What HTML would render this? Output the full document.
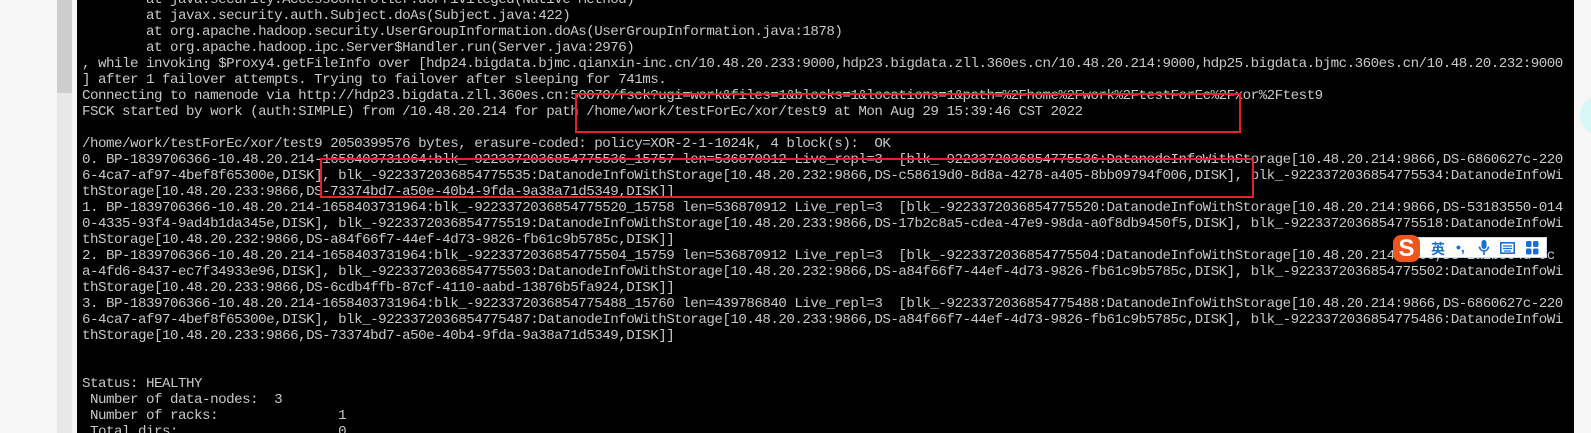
<!DOCTYPE html>
<html><head><meta charset="utf-8"><style>
html,body{margin:0;padding:0;width:1591px;height:433px;overflow:hidden;background:#f6f6f6;position:relative}
#sb{position:absolute;left:57px;top:0;width:15px;height:433px;background:#e8e8e8}
#sb2{position:absolute;left:57px;top:0;width:15px;height:93px;background:#cdcdcd}
#term{position:absolute;left:77px;top:0;width:1497px;height:433px;background:#000;overflow:hidden}
pre{position:absolute;left:5px;top:-8px;margin:0;font-family:"Liberation Mono",monospace;font-size:14px;letter-spacing:-0.5px;line-height:16px;color:#c8c8c8;white-space:pre;transform:scaleX(1.013);transform-origin:0 0}
.box{position:absolute;border:2px solid #e3202b;box-sizing:border-box}
#ime{position:absolute;left:1400px;top:237px;width:147px;height:21px;background:#fff;border:1px solid #cfd8e8;box-sizing:border-box}
#s{position:absolute;left:1393px;top:235px;width:27px;height:27px;border-radius:8px;background:#f0561c;color:#fff;font:bold 24px "Liberation Sans",sans-serif;text-align:center;line-height:27px}
.i{position:absolute;top:239px;color:#1a6fd6;font:bold 14px "Liberation Sans","Noto Sans CJK SC",sans-serif}
#circ{position:absolute;left:1580px;top:95px;width:40px;height:40px;border-radius:50%;background:#d6f7f6}
</style></head><body>
<div id="sb"></div><div id="sb2"></div><div id="circ"></div>
<div id="term"><pre>        at java.security.AccessController.doPrivileged(Native Method)
        at javax.security.auth.Subject.doAs(Subject.java:422)
        at org.apache.hadoop.security.UserGroupInformation.doAs(UserGroupInformation.java:1878)
        at org.apache.hadoop.ipc.Server$Handler.run(Server.java:2976)
, while invoking $Proxy4.getFileInfo over [hdp24.bigdata.bjmc.qianxin-inc.cn/10.48.20.233:9000,hdp23.bigdata.zll.360es.cn/10.48.20.214:9000,hdp25.bigdata.bjmc.360es.cn/10.48.20.232:9000
] after 1 failover attempts. Trying to failover after sleeping for 741ms.
Connecting to namenode via http://hdp23.bigdata.zll.360es.cn:50070/fsck?ugi=work&amp;files=1&amp;blocks=1&amp;locations=1&amp;path=%2Fhome%2Fwork%2FtestForEc%2Fxor%2Ftest9
FSCK started by work (auth:SIMPLE) from /10.48.20.214 for path /home/work/testForEc/xor/test9 at Mon Aug 29 15:39:46 CST 2022

/home/work/testForEc/xor/test9 2050399576 bytes, erasure-coded: policy=XOR-2-1-1024k, 4 block(s):  OK
0. BP-1839706366-10.48.20.214-1658403731964:blk_-9223372036854775536_15757 len=536870912 Live_repl=3  [blk_-9223372036854775536:DatanodeInfoWithStorage[10.48.20.214:9866,DS-6860627c-220
6-4ca7-af97-4bef8f65300e,DISK], blk_-9223372036854775535:DatanodeInfoWithStorage[10.48.20.232:9866,DS-c58619d0-8d8a-4278-a405-8bb09794f006,DISK], blk_-9223372036854775534:DatanodeInfoWi
thStorage[10.48.20.233:9866,DS-73374bd7-a50e-40b4-9fda-9a38a71d5349,DISK]]
1. BP-1839706366-10.48.20.214-1658403731964:blk_-9223372036854775520_15758 len=536870912 Live_repl=3  [blk_-9223372036854775520:DatanodeInfoWithStorage[10.48.20.214:9866,DS-53183550-014
0-4335-93f4-9ad4b1da345e,DISK], blk_-9223372036854775519:DatanodeInfoWithStorage[10.48.20.233:9866,DS-17b2c8a5-cdea-47e9-98da-a0f8db9450f5,DISK], blk_-9223372036854775518:DatanodeInfoWi
thStorage[10.48.20.232:9866,DS-a84f66f7-44ef-4d73-9826-fb61c9b5785c,DISK]]
2. BP-1839706366-10.48.20.214-1658403731964:blk_-9223372036854775504_15759 len=536870912 Live_repl=3  [blk_-9223372036854775504:DatanodeInfoWithStorage[10.48.20.214:9866,DS-1a2b3c4d-9c
a-4fd6-8437-ec7f34933e96,DISK], blk_-9223372036854775503:DatanodeInfoWithStorage[10.48.20.232:9866,DS-a84f66f7-44ef-4d73-9826-fb61c9b5785c,DISK], blk_-9223372036854775502:DatanodeInfoWi
thStorage[10.48.20.233:9866,DS-6cdb4ffb-87cf-4110-aabd-13876b5fa924,DISK]]
3. BP-1839706366-10.48.20.214-1658403731964:blk_-9223372036854775488_15760 len=439786840 Live_repl=3  [blk_-9223372036854775488:DatanodeInfoWithStorage[10.48.20.214:9866,DS-6860627c-220
6-4ca7-af97-4bef8f65300e,DISK], blk_-9223372036854775487:DatanodeInfoWithStorage[10.48.20.233:9866,DS-a84f66f7-44ef-4d73-9826-fb61c9b5785c,DISK], blk_-9223372036854775486:DatanodeInfoWi
thStorage[10.48.20.233:9866,DS-73374bd7-a50e-40b4-9fda-9a38a71d5349,DISK]]


Status: HEALTHY
 Number of data-nodes:  3
 Number of racks:               1
 Total dirs:                    0</pre></div>
<div class="box" style="left:575px;top:93px;width:666px;height:40px"></div>
<div class="box" style="left:320px;top:158px;width:934px;height:40px"></div>
<div id="ime"></div>
<div id="s">S</div>
<span class="i" style="left:1431px">英</span>
<span class="i" style="left:1456px">•,</span>
<svg style="position:absolute;left:1478px;top:240px" width="12" height="16" viewBox="0 0 12 16"><rect x="3.5" y="0" width="5" height="9" rx="2.5" fill="#1a6fd6"/><path d="M1.5 6.5a4.5 4.5 0 0 0 9 0M6 11v4" stroke="#1a6fd6" stroke-width="1.6" fill="none"/></svg>
<svg style="position:absolute;left:1500px;top:242px" width="15" height="12" viewBox="0 0 15 12"><rect x="0.8" y="0.8" width="13.4" height="10.4" fill="none" stroke="#1a6fd6" stroke-width="1.6"/><path d="M3 4h9M3 6.5h9M4 9h7" stroke="#1a6fd6" stroke-width="1.3"/></svg>
<svg style="position:absolute;left:1526px;top:241px" width="13" height="14" viewBox="0 0 13 14"><rect x="0" y="0" width="5.5" height="6" rx="1.5" fill="#1a6fd6"/><rect x="7" y="0" width="5.5" height="6" rx="1.5" fill="#1a6fd6"/><rect x="0" y="7.5" width="5.5" height="6" rx="1.5" fill="#1a6fd6"/><rect x="7" y="7.5" width="5.5" height="6" rx="1.5" fill="#1a6fd6"/></svg>
</body></html>
